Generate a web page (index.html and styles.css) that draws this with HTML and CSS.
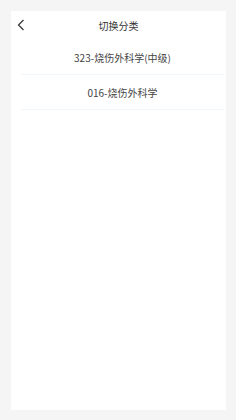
FILE: index.html
```html
<!DOCTYPE html>
<html lang="zh-CN">
<head>
    <meta charset="UTF-8">
    <meta name="viewport" content="width=device-width, initial-scale=1.0">
    <title>切换分类</title>
    <link rel="stylesheet" href="styles.css">
</head>
<body>
    <div class="card">
        <div class="header">
            <span class="back">
                <svg width="8" height="12" viewBox="0 0 8 12"><path d="M6.5 1 L1.5 6 L6.5 11" fill="none" stroke="#333" stroke-width="1.2"/></svg>
            </span>
            <div class="title">切换分类</div>
        </div>
        <div class="list">
            <div class="item">323-烧伤外科学(中级)</div>
            <div class="item">016-烧伤外科学</div>
        </div>
    </div>
</body>
</html>
```

FILE: styles.css
```css
body {
    margin: 0;
    padding: 11px 10px 10px 11px;
    background-color: #f5f5f5;
    font-family: "Noto Sans CJK SC", "Liberation Sans", sans-serif;
    color: #333;
}

.card {
    background-color: #fff;
    height: 399px;
}

.header {
    position: relative;
    height: 29px;
    display: flex;
    align-items: center;
    justify-content: center;
}

.back {
    position: absolute;
    left: 6px;
    top: 8px;
    display: flex;
}

.title {
    font-size: 10px;
    color: #333;
}

.item {
    height: 34px;
    margin: 0 2px 0 10px;
    display: flex;
    align-items: center;
    justify-content: center;
    font-size: 10px;
    color: #444;
    border-bottom: 1px solid #f2f7fb;
}
```
